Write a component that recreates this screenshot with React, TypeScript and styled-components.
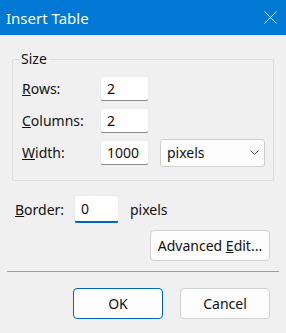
import React from 'react';
import styled, { createGlobalStyle } from 'styled-components';

const GlobalStyle = createGlobalStyle`
  html, body {
    margin: 0;
    padding: 0;
    background: #f0f0f0;
  }
  body {
    font-family: 'Noto Sans', 'Open Sans', sans-serif;
    font-size: 14px;
    color: #111;
  }
`;

const Window = styled.div`
  width: 286px;
  height: 333px;
  background: #f0f0f0;
  display: flex;
  flex-direction: column;
  overflow: hidden;
`;

const TitleBar = styled.div`
  height: 35px;
  flex: none;
  background: #0078d4;
  color: #fff;
  display: flex;
  align-items: center;
  justify-content: space-between;
  padding: 0 9px 0 6px;
  font-size: 15px;
`;

const CloseButton = styled.button`
  background: none;
  border: none;
  padding: 0;
  width: 13px;
  height: 13px;
  display: flex;
  align-items: center;
  justify-content: center;
  color: #fff;
`;

const Body = styled.div`
  display: flex;
  flex-direction: column;
  padding: 16px 7px 0 7px;
`;

const GroupBox = styled.fieldset`
  margin: 0 5px;
  padding: 9px 0 15px 9px;
  border: 1px solid #dcdcdc;
  border-radius: 2px;
  min-width: 0;
`;

const Legend = styled.legend`
  padding: 0 2px;
  margin-left: -3px;
  line-height: 16px;
`;

const FieldGrid = styled.div`
  display: grid;
  grid-template-columns: 78px 49px auto;
  grid-auto-rows: 25px;
  row-gap: 7px;
  align-items: center;
`;

const Label = styled.label`
  line-height: 18px;
`;

const TextBox = styled.div<{ $focused?: boolean; $width?: number; $height?: number }>`
  width: ${({ $width }) => $width ?? 49}px;
  height: ${({ $height }) => $height ?? 25}px;
  box-sizing: border-box;
  background: #fff;
  border: 1px solid #ececec;
  border-bottom: ${({ $focused }) => ($focused ? '2px solid #0067c0' : '1px solid #8a8a8a')};
  border-radius: 3px;
  padding: 0 6px;
  display: flex;
  align-items: center;
  line-height: 18px;
`;

const Select = styled.div`
  margin-left: 11px;
  width: 105px;
  height: 28px;
  box-sizing: border-box;
  background: #fdfdfd;
  border: 1px solid #cfcfcf;
  border-radius: 3px;
  padding: 0 5px 0 6px;
  display: flex;
  align-items: center;
  justify-content: space-between;
`;

const BorderRow = styled.div`
  display: flex;
  align-items: center;
  margin: 14px 0 0 8px;
`;

const BorderLabel = styled.label`
  width: 59px;
`;

const Unit = styled.span`
  margin-left: 11px;
`;

const ButtonRow = styled.div<{ $top?: number }>`
  display: flex;
  justify-content: flex-end;
  gap: 17px;
  padding-right: 9px;
  margin-top: ${({ $top }) => $top ?? 0}px;
`;

const Button = styled.button<{ $primary?: boolean; $width?: number }>`
  font: inherit;
  color: #111;
  height: 31px;
  width: ${({ $width }) => $width ?? 90}px;
  background: #fdfdfd;
  border: 1px solid ${({ $primary }) => ($primary ? '#0067c0' : '#d0d0d0')};
  border-radius: 4px;
  padding: 0;
`;

const Separator = styled.hr`
  margin: 10px 0 16px 0;
  border: none;
  border-top: 1px solid #a0a0a0;
  height: 0;
`;

const App: React.FC = () => {
  return (
    <>
      <GlobalStyle />
      <Window>
        <TitleBar>
          <span>Insert Table</span>
          <CloseButton aria-label="Close">
            <svg width="13" height="13" viewBox="0 0 13 13">
              <path d="M0.5 0.5 L12.5 12.5 M12.5 0.5 L0.5 12.5" stroke="currentColor" strokeWidth="1" />
            </svg>
          </CloseButton>
        </TitleBar>
        <Body>
          <GroupBox>
            <Legend>Size</Legend>
            <FieldGrid>
              <Label><u>R</u>ows:</Label>
              <TextBox>2</TextBox>
              <span />
              <Label><u>C</u>olumns:</Label>
              <TextBox>2</TextBox>
              <span />
              <Label><u>W</u>idth:</Label>
              <TextBox>1000</TextBox>
              <Select>
                <span>pixels</span>
                <svg width="9" height="6" viewBox="0 0 9 6">
                  <path d="M0.5 0.5 L4.5 4.5 L8.5 0.5" fill="none" stroke="#555" strokeWidth="1" />
                </svg>
              </Select>
            </FieldGrid>
          </GroupBox>
          <BorderRow>
            <BorderLabel><u>B</u>order:</BorderLabel>
            <TextBox $focused $width={45} $height={28}>0</TextBox>
            <Unit>pixels</Unit>
          </BorderRow>
          <ButtonRow $top={7}>
            <Button $width={120}>Advanced <u>E</u>dit...</Button>
          </ButtonRow>
          <Separator />
          <ButtonRow>
            <Button $primary>OK</Button>
            <Button>Cancel</Button>
          </ButtonRow>
        </Body>
      </Window>
    </>
  );
};

export default App;
